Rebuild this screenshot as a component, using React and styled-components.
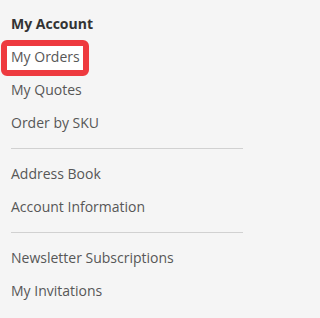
import React from "react";
import styled, { createGlobalStyle } from "styled-components";

const GlobalStyle = createGlobalStyle`
  html, body {
    margin: 0;
    padding: 0;
    background: #f5f5f5;
  }
  body {
    font-family: "Open Sans", "Liberation Sans", sans-serif;
  }
`;

const Sidebar = styled.nav`
  width: 259px;
  min-height: 318px;
  box-sizing: border-box;
  padding: 7px 16px 0 11px;
  background: #f5f5f5;
`;

const Title = styled.div`
  height: 33px;
  line-height: 33px;
  font-size: 14px;
  font-weight: 700;
  color: #333;
`;

const List = styled.ul`
  list-style: none;
  margin: 0;
  padding: 0;
`;

const Item = styled.li`
  position: relative;
  height: 33px;
  line-height: 33px;
  font-size: 14px;
  color: #575757;
  white-space: nowrap;

  ${(p) =>
    p.$highlight &&
    `
    &::before {
      content: "";
      position: absolute;
      left: -10px;
      top: 0;
      width: 76px;
      height: 24px;
      border: 6px solid #ee3a3f;
      border-radius: 6px;
      background: #fff;
      z-index: 0;
    }
  `}
`;

const Label = styled.span`
  position: relative;
  z-index: 1;
`;

const Divider = styled.li`
  height: 1px;
  margin: 9px 0 8px;
  background: #d1d1d1;
`;

const groups = [
  [{ label: "My Orders", highlight: true }, { label: "My Quotes" }, { label: "Order by SKU" }],
  [{ label: "Address Book" }, { label: "Account Information" }],
  [{ label: "Newsletter Subscriptions" }, { label: "My Invitations" }],
];

export default function App() {
  return (
    <>
      <GlobalStyle />
      <Sidebar>
        <Title>My Account</Title>
        <List>
          {groups.map((group, gi) => (
            <React.Fragment key={gi}>
              {gi > 0 && <Divider />}
              {group.map((item) => (
                <Item key={item.label} $highlight={item.highlight}>
                  <Label>{item.label}</Label>
                </Item>
              ))}
            </React.Fragment>
          ))}
        </List>
      </Sidebar>
    </>
  );
}
